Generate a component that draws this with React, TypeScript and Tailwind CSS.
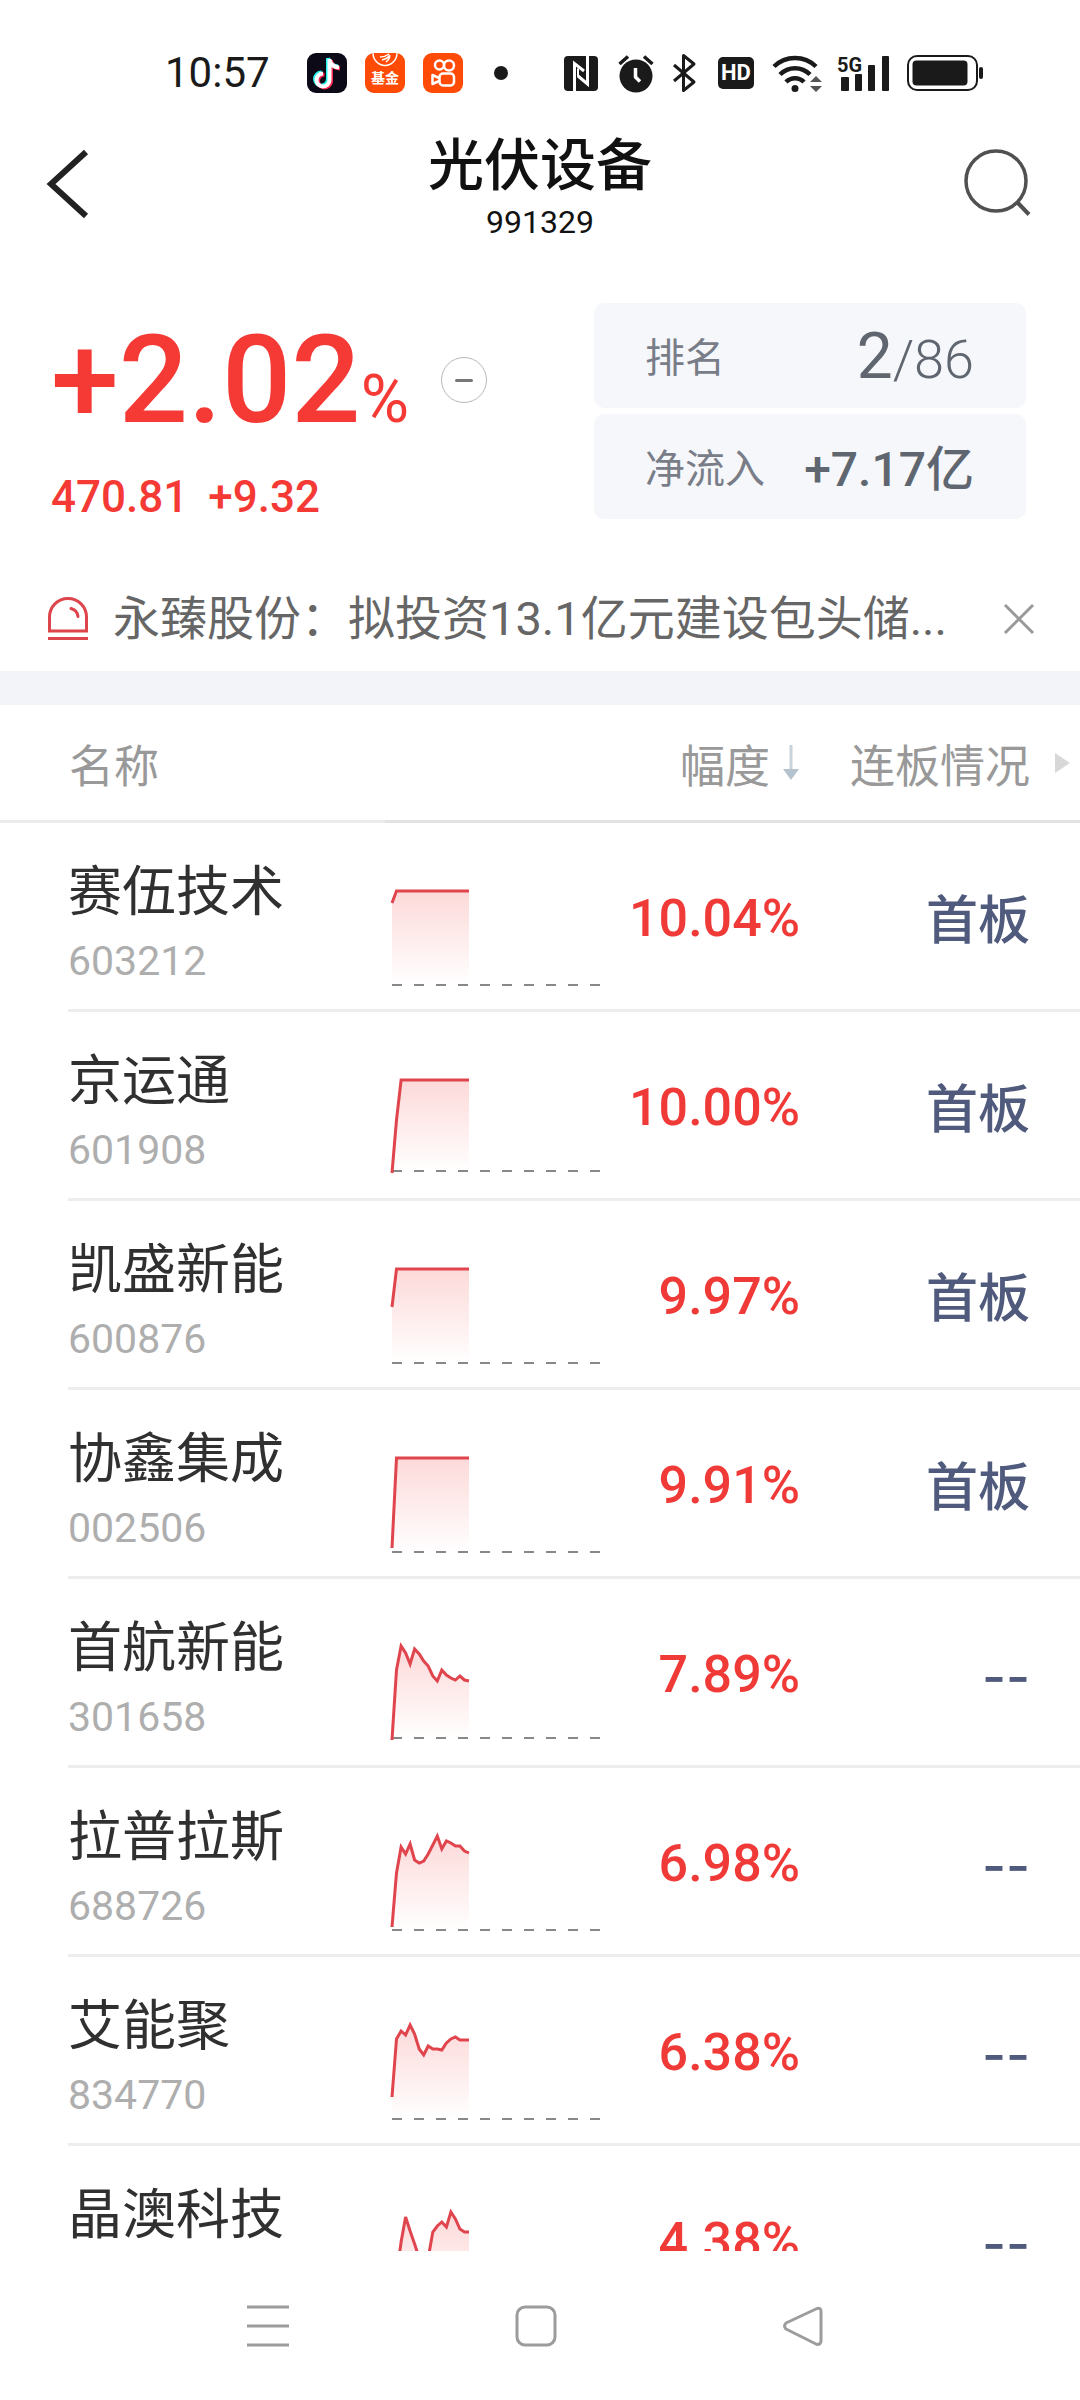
interface Stock {
  name: string;
  code?: string;
  change: string;
  board: string;
  base: number;
  points: number[];
}

const flat = (n: number) => Array<number>(n).fill(68);

const stocks: Stock[] = [
  { name: "赛伍技术", code: "603212", change: "10.04%", board: "首板", base: 162, points: [80, ...flat(17)] },
  { name: "京运通", code: "601908", change: "10.00%", board: "首板", base: 159, points: [161, 108, ...flat(16)] },
  { name: "凯盛新能", code: "600876", change: "9.97%", board: "首板", base: 162, points: [106, ...flat(17)] },
  { name: "协鑫集成", code: "002506", change: "9.91%", board: "首板", base: 162, points: [158, ...flat(17)] },
  {
    name: "首航新能",
    code: "301658",
    change: "7.89%",
    board: "--",
    base: 159,
    points: [161, 91, 67, 74, 85, 70, 75, 82, 87, 97, 102, 91, 96, 99, 101, 97, 101, 102],
  },
  {
    name: "拉普拉斯",
    code: "688726",
    change: "6.98%",
    board: "--",
    base: 162,
    points: [159, 105, 79, 86, 76, 92, 95, 93, 86, 77, 68, 81, 73, 75, 78, 78, 83, 85],
  },
  {
    name: "艾能聚",
    code: "834770",
    change: "6.38%",
    board: "--",
    base: 162,
    points: [140, 82, 74, 78, 68, 77, 92, 98, 89, 92, 92, 93, 86, 82, 80, 83, 83, 83],
  },
  {
    name: "晶澳科技",
    change: "4.38%",
    board: "--",
    base: 162,
    points: [160, 130, 96, 71, 85, 98, 112, 120, 112, 86, 80, 76, 81, 66, 73, 83, 86, 86],
  },
];

/* 分时走势图 */
function Sparkline({ id, points, base }: { id: string; points: number[]; base: number }) {
  const step = 77 / (points.length - 1);
  const line = points.map((y, i) => `${(7 + i * step).toFixed(1)},${y}`).join(" ");
  return (
    <svg width="220" height="186" viewBox="0 0 220 186" className="block" aria-hidden="true">
      <defs>
        <linearGradient id={id} gradientUnits="userSpaceOnUse" x1="0" y1="66" x2="0" y2={base}>
          <stop offset="0" stopColor="#fdd8d8" />
          <stop offset="1" stopColor="#fff" />
        </linearGradient>
      </defs>
      <polygon points={`7,${base} ${line} 84,${base}`} fill={`url(#${id})`} />
      <path d={`M7 ${base}H216`} stroke="#888" strokeWidth="2" strokeDasharray="10 12" />
      <polyline points={line} fill="none" stroke="#e0444d" strokeWidth="3" />
    </svg>
  );
}

function StatusBar() {
  return (
    <div className="flex h-[104px] shrink-0 items-center justify-between pt-[41px] pr-[97px] pl-[165px] text-[#1a1a1a]">
      <div className="flex items-center">
        <span className="w-[142px] text-[42px] leading-[48px]">10:57</span>
        <div className="flex items-center gap-[18px]">
          {/* 抖音 */}
          <svg width="40" height="40" viewBox="0 0 40 40">
            <rect width="40" height="40" rx="9" fill="#0b0a16" />
            <g fill="none" strokeWidth="4">
              <path d="M21 5V26a6.500 6.500 0 1 1-6.500-6.500M21 5c1 5 4 8 10 8.500" stroke="#25f4ee" />
              <path d="M24 7V28a6.500 6.500 0 1 1-6.500-6.500M24 8c1 5 4 7 9 7.500" stroke="#fe2c55" />
              <path d="M22.500 6V27a6.500 6.500 0 1 1-6.500-6.500M22.500 7c1 5 4 7 9.500 7.500" stroke="#fff" />
            </g>
          </svg>
          {/* 基金 */}
          <div className="flex h-10 w-10 flex-col items-center overflow-hidden rounded-[9px] bg-[#ff4b05] text-white">
            <svg width="26" height="15" viewBox="0 0 26 15" fill="none" stroke="#fff">
              <path d="M1 0a12 12.500 0 0 0 24 0" strokeWidth="1.500" />
              <path d="M8 4q5 0 9-3M10 7q5-1 8-5M14 9q3-2 4-6" strokeWidth="1.500" />
            </svg>
            <span className="text-[14px] leading-[20px] font-bold">基金</span>
          </div>
          {/* 快手 */}
          <svg width="40" height="40" viewBox="0 0 40 40">
            <rect width="40" height="40" rx="9" fill="#ff4b05" />
            <g fill="none" stroke="#fff" strokeWidth="2.500">
              <circle cx="16.500" cy="12" r="4.500" />
              <circle cx="26" cy="12.500" r="5" />
              <rect x="16.500" y="20.500" width="14.500" height="12" rx="3.500" />
              <path d="M16 25l-6.500-3v9l6.500-3" strokeLinejoin="round" />
            </g>
          </svg>
        </div>
        <span className="ml-[31px] h-3.5 w-3.5 rounded-full bg-[#1a1a1a]" />
      </div>

      <div className="flex items-center">
        {/* NFC */}
        <svg width="34" height="36" viewBox="0 0 34 36">
          <rect y="1" width="34" height="35" rx="4" fill="#1a1a1a" />
          <path d="M10.500 36V8.500L20 16M23.500 1v28L14 21" fill="none" stroke="#fff" strokeWidth="3" />
          <path d="M14 13.500V21l6 5" fill="none" stroke="#fff" strokeWidth="2" />
        </svg>
        {/* 闹钟 */}
        <svg className="ml-5" width="36" height="40" viewBox="0 0 36 40">
          <circle cx="18" cy="23" r="16.500" fill="#1a1a1a" />
          <path d="M17.500 15v9l4.500 4.500" fill="none" stroke="#fff" strokeWidth="3.500" />
          <path d="M1.500 11l8.500-7.500M34.500 11L26 3.500" stroke="#1a1a1a" strokeWidth="3.500" />
        </svg>
        {/* 蓝牙 */}
        <svg className="ml-[18px]" width="26" height="40" viewBox="0 0 26 40" fill="none" stroke="#1a1a1a" strokeWidth="3">
          <path d="M2 12l20 17-10.500 8.500v-35L22 11 2 28" strokeLinejoin="round" />
        </svg>
        <span className="ml-5 flex h-8 w-9 items-center justify-center rounded-[5px] bg-[#1a1a1a] text-[22px] leading-6 font-bold text-white">
          HD
        </span>
        {/* Wi-Fi */}
        <svg className="ml-[18px]" width="50" height="40" viewBox="0 0 50 40">
          <g fill="none" stroke="#1a1a1a" strokeWidth="4.500">
            <path d="M2 13.500a30 30 0 0 1 42 0" />
            <path d="M8 21.500a21 21 0 0 1 30 0" />
            <path d="M14 29a12.500 12.500 0 0 1 18 0" />
          </g>
          <circle cx="23" cy="35.500" r="3.500" fill="#1a1a1a" />
          <path d="M38 29l6-6 6 6zM38 33l6 6 6-6z" fill="#555" />
        </svg>
        {/* 信号 */}
        <svg className="ml-[15px]" width="54" height="40" viewBox="0 0 54 40" fill="#1a1a1a">
          <text x="0" y="19" fontSize="20" fontWeight="700" className="font-['Roboto']">
            5G
          </text>
          <rect x="4" y="24" width="8" height="14" rx="1" />
          <rect x="18" y="21" width="7" height="17" rx="1" />
          <rect x="31" y="12" width="7" height="26" rx="1" />
          <rect x="45" y="3" width="7" height="35" rx="1" />
        </svg>
        {/* 电量 */}
        <svg className="ml-4" width="76" height="36" viewBox="0 0 76 36">
          <rect x="1" y="1" width="69" height="34" rx="9" fill="none" stroke="#1a1a1a" strokeWidth="2" />
          <rect x="5.500" y="5.500" width="55" height="25" rx="4" fill="#1a1a1a" />
          <rect x="72" y="12" width="4" height="12" rx="2" fill="#1a1a1a" />
        </svg>
      </div>
    </div>
  );
}

function Header() {
  return (
    <header className="flex h-40 shrink-0 items-center justify-between px-[46px]">
      <button type="button" aria-label="返回" className="w-[70px]">
        <svg width="44" height="70" viewBox="0 0 44 70" fill="none" stroke="#222" strokeWidth="6">
          <path d="M40 3L5 35l35 32" />
        </svg>
      </button>
      <div className="pt-3 text-center text-[#111]">
        <h1 className="text-[56px] leading-[64px] font-medium">光伏设备</h1>
        <p className="text-[32px] leading-[48px]">991329</p>
      </div>
      <button type="button" aria-label="搜索" className="w-[70px]">
        <svg width="70" height="70" viewBox="0 0 70 70" fill="none" stroke="#505050">
          <circle cx="32" cy="32" r="30" strokeWidth="3.500" />
          <path d="M54 54l11 11.500" strokeWidth="4" />
        </svg>
      </button>
    </header>
  );
}

function Summary() {
  return (
    <section className="flex shrink-0 items-start justify-between pt-[39px] pr-[54px] pl-[51px]">
      <div className="text-[#f53a36]">
        <div className="flex items-start">
          <div className="flex items-baseline font-medium">
            <span className="text-[122px] leading-[156px]">+2.02</span>
            <span className="text-[66px] font-normal">%</span>
          </div>
          <button
            type="button"
            aria-label="收起"
            className="mt-[54px] ml-8 flex h-[46px] w-[46px] items-center justify-center rounded-full border border-[#b8b8b8]"
          >
            <span className="h-[3px] w-[18px] rounded bg-[#777]" />
          </button>
        </div>
        <div className="flex gap-5 pt-2 text-[44px] leading-[60px] font-medium">
          <span>470.81</span>
          <span>+9.32</span>
        </div>
      </div>

      <dl className="flex w-[432px] flex-col gap-1.5 text-[#60666f]">
        <div className="flex h-[105px] items-center justify-between rounded-[10px] bg-[#f5f7fb] pt-1.5 pr-[52px] pl-[51px]">
          <dt className="text-[40px] text-[#787d87]">排名</dt>
          <dd className="flex items-baseline leading-[80px]">
            <span className="text-[64px]">2</span>
            <span className="text-[54px] font-light">/86</span>
          </dd>
        </div>
        <div className="flex h-[105px] items-center justify-between rounded-[10px] bg-[#f5f7fb] pt-1.5 pr-[52px] pl-[51px]">
          <dt className="text-[40px] text-[#787d87]">净流入</dt>
          <dd className="text-[48px] font-medium">+7.17亿</dd>
        </div>
      </dl>
    </section>
  );
}

function NewsBar() {
  return (
    <div className="mt-10 flex h-[104px] shrink-0 items-center pr-[45px] pl-[47px]">
      <svg width="42" height="44" viewBox="0 0 42 44" fill="none" stroke="#dd444c" strokeWidth="3" className="shrink-0">
        <path d="M2.500 34V20a18.500 18.500 0 0 1 37 0v14zM1 41.500h40" />
        <path d="M24 11.500c4 1 6.500 4 7 8" strokeLinecap="round" />
      </svg>
      <a href="#news" className="ml-6 min-w-0 flex-1 truncate text-[47px] leading-[64px] text-[#666]">
        永臻股份：拟投资13.1亿元建设包头储...
      </a>
      <button type="button" aria-label="关闭" className="shrink-0">
        <svg width="32" height="32" viewBox="0 0 32 32" stroke="#999" strokeWidth="3">
          <path d="M2 2l28 28M30 2L2 30" />
        </svg>
      </button>
    </div>
  );
}

function StockTable() {
  return (
    <div className="min-h-0 flex-1 overflow-hidden">
      <table className="w-full table-fixed border-separate border-spacing-0">
        <colgroup>
          <col />
          <col className="w-[225px]" />
          <col className="w-[190px]" />
          <col className="w-[280px]" />
        </colgroup>
        <thead>
          <tr className="h-[118px] text-[45px] text-[#999]">
            <th className="border-b-[3px] border-[#ebebeb] p-0 pt-2.5 pl-[69px] text-left font-normal">名称</th>
            <th className="border-b-[3px] border-[#e2e2e2] p-0" aria-label="分时" />
            <th className="border-b-[3px] border-[#e2e2e2] p-0 font-normal">
              <button type="button" className="ml-auto flex items-center gap-3">
                <span className="pt-2.5">幅度</span>
                <svg width="18" height="36" viewBox="0 0 18 36">
                  <path d="M9 0v28" stroke="#c9d3db" strokeWidth="3" />
                  <path d="M1 24h16L9 35z" fill="#b4c3ce" />
                </svg>
              </button>
            </th>
            <th className="border-b-[3px] border-[#e2e2e2] p-0 pr-[9px] font-normal">
              <div className="flex items-center justify-end gap-6">
                <span className="pt-2.5">连板情况</span>
                <svg width="17" height="22" viewBox="0 0 17 22">
                  <path d="M1 1l15 10L1 21z" fill="#d8d8d8" />
                </svg>
              </div>
            </th>
          </tr>
        </thead>
        <tbody>
          {stocks.map((stock) => (
            <tr key={stock.name} className="h-[189px]">
              <td className="p-0">
                <div className="ml-[68px] h-[189px] border-b-[3px] border-[#ededed] pt-9">
                  <div className="text-[54px] leading-[68px] text-[#303030]">{stock.name}</div>
                  {stock.code && <div className="text-[41px] leading-[68px] text-[#aeaeae]">{stock.code}</div>}
                </div>
              </td>
              <td className="border-b-[3px] border-[#ededed] p-0">
                <Sparkline id={`area-${stock.name}`} points={stock.points} base={stock.base} />
              </td>
              <td className="border-b-[3px] border-[#ededed] p-0 pt-1.5 text-right text-[52px] font-medium text-[#f03a38]">
                {stock.change}
              </td>
              <td className="border-b-[3px] border-[#ededed] p-0 pt-2.5 pr-[50px] text-right font-['Inter','Noto_Sans_CJK_SC',sans-serif] text-[52px] font-medium text-[#505a7c]">
                {stock.board}
              </td>
            </tr>
          ))}
        </tbody>
      </table>
    </div>
  );
}

function NavBar() {
  return (
    <nav className="flex h-[149px] shrink-0 items-center justify-between bg-white pr-[256px] pl-[247px]">
      <button type="button" aria-label="最近任务">
        <svg width="42" height="42" viewBox="0 0 42 42" stroke="#9c9c9c" strokeWidth="3">
          <path d="M0 2h42M0 21h42M0 40h42" />
        </svg>
      </button>
      <button type="button" aria-label="主屏幕">
        <svg width="42" height="42" viewBox="0 0 42 42" fill="none" stroke="#9c9c9c" strokeWidth="3">
          <rect x="2" y="2" width="38" height="38" rx="8" />
        </svg>
      </button>
      <button type="button" aria-label="返回上一页">
        <svg width="42" height="42" viewBox="0 0 42 42" fill="none" stroke="#9c9c9c" strokeWidth="3" strokeLinejoin="round">
          <path d="M35 3.500L4 18q-3 3 0 6l31 15.500q4 0 4-4v-29q0-4-4-3z" />
        </svg>
      </button>
    </nav>
  );
}

export default function App() {
  return (
    <main className="flex h-screen flex-col overflow-hidden bg-white font-['Roboto','Noto_Sans_CJK_SC',sans-serif]">
      <StatusBar />
      <Header />
      <Summary />
      <NewsBar />
      <div className="h-[34px] shrink-0 bg-[#f3f4f9]" />
      <StockTable />
      <NavBar />
    </main>
  );
}
